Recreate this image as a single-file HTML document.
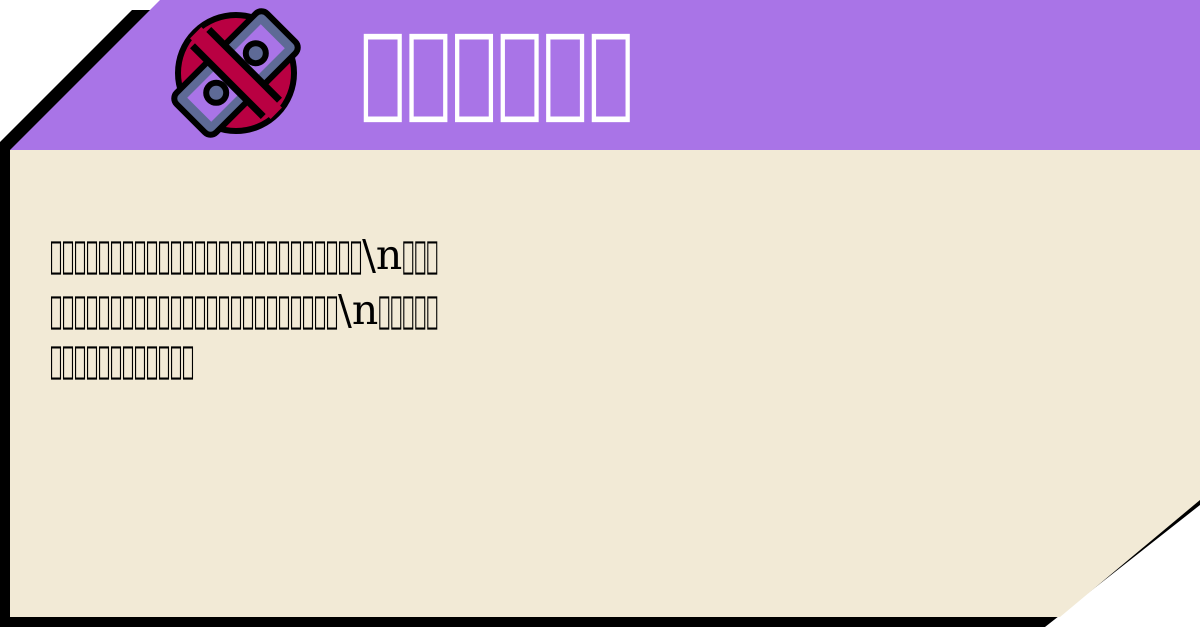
<!DOCTYPE html>
<html><head><meta charset="utf-8"><style>
html,body{margin:0;padding:0;width:1200px;height:627px;overflow:hidden;background:#fff}
.t{position:absolute;white-space:nowrap;font-family:"DejaVu Serif",serif}
.title{left:360px;top:11px;font-size:76px;line-height:90px;color:#fff;transform:scaleY(1.32);transform-origin:0 0}
.body{left:50px;font-size:20px;line-height:30px;color:#000}
.b{display:inline-block;transform:scaleY(1.9);transform-origin:0 70%}
.n{font-size:41px;vertical-align:-2px}
</style></head><body>
<svg width="1200" height="627" style="position:absolute;left:0;top:0">
<polygon points="0,142 132,10 1200,10 1200,505 1045,627 0,627" fill="#000"/>
<polygon points="10,150 160,0 1200,0 1200,150" fill="#a974e7"/>
<polygon points="10,150 1200,150 1200,500 1060,617 10,617" fill="#f2ead6"/>
<circle cx="236" cy="73" r="58" fill="#b90042" stroke="#000" stroke-width="6"/>
<g transform="translate(236,73) rotate(-45)" stroke="#000" stroke-width="6" stroke-linejoin="round">
<rect x="-64" y="-28" width="128" height="56" rx="8" fill="#5e6a96"/>
<rect x="-52" y="-17" width="104" height="34" fill="#a974e7" stroke="none"/>
<circle cx="-28" cy="0" r="10" fill="#5e6a96"/>
<circle cx="28" cy="0" r="10" fill="#5e6a96"/>
<line x1="0" y1="-50" x2="0" y2="50" stroke="#000" stroke-width="30"/>
<line x1="0" y1="-57" x2="0" y2="57" stroke="#b90042" stroke-width="16"/>
</g>
</svg>
<div class="t title">&#xE000;&#xE001;&#xE002;&#xE003;&#xE004;&#xE005;</div>
<div class="t body" style="top:240px"><span class="b">&#xE000;&#xE001;&#xE002;&#xE003;&#xE004;&#xE005;&#xE006;&#xE007;&#xE008;&#xE009;&#xE00A;&#xE00B;&#xE00C;&#xE00D;&#xE00E;&#xE00F;&#xE010;&#xE011;&#xE012;&#xE013;&#xE014;&#xE015;&#xE016;&#xE017;&#xE018;&#xE019;</span><span class="n">\n</span><span class="b">&#xE01A;&#xE01B;&#xE01C;</span></div>
<div class="t body" style="top:295px"><span class="b">&#xE000;&#xE001;&#xE002;&#xE003;&#xE004;&#xE005;&#xE006;&#xE007;&#xE008;&#xE009;&#xE00A;&#xE00B;&#xE00C;&#xE00D;&#xE00E;&#xE00F;&#xE010;&#xE011;&#xE012;&#xE013;&#xE014;&#xE015;&#xE016;&#xE017;</span><span class="n">\n</span><span class="b">&#xE01A;&#xE01B;&#xE01C;&#xE01D;&#xE01E;</span></div>
<div class="t body" style="top:350px"><span class="b">&#xE000;&#xE001;&#xE002;&#xE003;&#xE004;&#xE005;&#xE006;&#xE007;&#xE008;&#xE009;&#xE00A;&#xE00B;</span></div>
</body></html>
